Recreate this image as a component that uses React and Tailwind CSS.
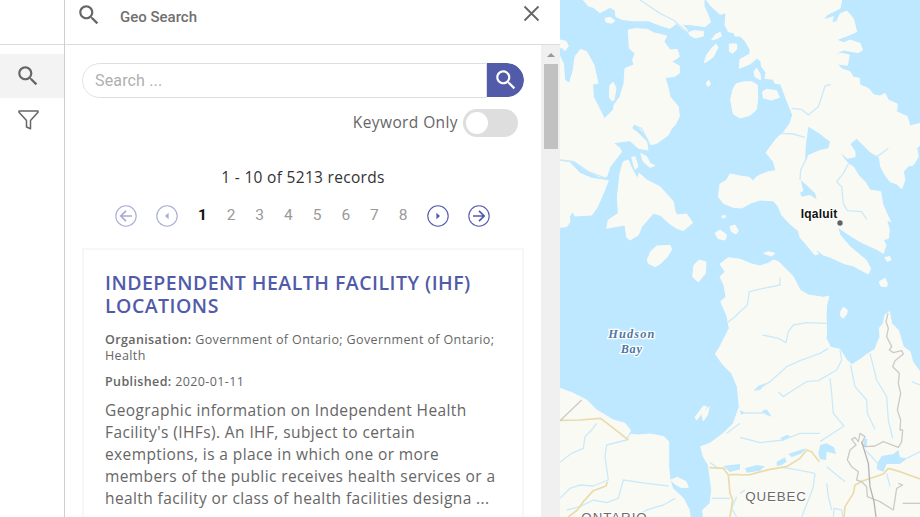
import React from 'react';

const SearchIcon = ({ size = 26, className = '' }) => (
  <svg width={size} height={size} viewBox="0 0 24 24" fill="currentColor" className={className}>
    <path d="M15.5 14h-.79l-.28-.27C15.41 12.59 16 11.11 16 9.5 16 5.91 13.09 3 9.5 3S3 5.91 3 9.5 5.91 16 9.5 16c1.61 0 3.09-.59 4.23-1.57l.27.28v.79l5 4.99L20.49 19l-4.99-5zm-6 0C7.01 14 5 11.99 5 9.5S7.01 5 9.5 5 14 7.01 14 9.5 11.99 14 9.5 14z" />
  </svg>
);

const PageArrow = ({ kind, faded }) => (
  <svg width="22" height="22" viewBox="0 0 22 22" fill="none" stroke="#515ba9" className={faded ? 'opacity-50' : ''}>
    <circle cx="11" cy="11" r="10.2" strokeWidth="1.1" />
    {kind === 'first' && <path d="M17 11H6M11 5.8 5.8 11l5.2 5.2" strokeWidth="1.7" />}
    {kind === 'prev' && <path d="M12.6 7.8v6.4L9 11z" fill="#515ba9" stroke="none" />}
    {kind === 'next' && <path d="M9.4 7.8v6.4L13 11z" fill="#515ba9" stroke="none" />}
    {kind === 'last' && <path d="M5 11h11M11 5.8l5.2 5.2-5.2 5.2" strokeWidth="1.7" />}
  </svg>
);

const land = [
  // Arctic islands along the top
  'M70 0L85 18 100 22 120 38 150 22 165 30 168 50 185 58 215 62 265 62 300 76 330 85 350 70 365 85 380 96 384 92 365 72 400 75 435 80 452 66 440 35 432 18 432 0Z',
  'M135 55L150 52 165 62 155 70 138 66Z',
  'M385 98L400 92 430 94 430 108 405 114 390 106Z',
  'M440 0L450 15 480 43 498 38 495 75 505 95 522 98 525 108 540 108 555 122 570 148 570 162 540 178 538 205 570 192 590 175 602 182 605 200 618 218 615 235 640 238 645 250 662 252 680 300 698 345 690 370 672 395 665 402 650 415 618 458 640 485 648 512 625 515 600 525 588 532 580 543 568 532 540 528 510 522 500 540 480 552 475 590 490 610 520 622 545 624 575 608 600 600 640 602 655 620 665 645 690 672 715 692 720 712 740 735 765 765 775 762 765 745 790 765 810 771 850 790 880 798 925 822 932 805 918 780 900 765 870 740 840 705 832 680 860 700 900 725 950 748 970 760 978 735 970 720 985 715 988 690 980 660 992 665 980 640 968 612 962 575 930 570 915 545 895 525 880 500 865 492 848 470 840 455 862 475 885 470 885 455 870 432 890 415 910 435 930 455 958 472 962 500 975 525 990 545 1010 552 1025 566 1035 540 1030 515 1045 498 1060 495 1075 470 1070 445 1080 435V370L1050 378 1042 350 1010 335 1012 312 985 300 975 280 960 288 942 285 925 265 900 255 898 235 880 232 870 215 848 208 830 192 862 196 868 165 845 160 820 165 850 150 895 158 908 150 900 130 870 120 852 128 828 120 860 108 890 95 880 55 860 33 840 42 830 65 815 68 820 50 790 60 800 45 840 25 845 0Z',
  'M433 188L440 165 455 145 468 132 474 142 460 170 445 182Z',
  'M455 120L465 105 480 96 484 108 470 116Z',
  'M508 132L530 132 530 148 518 160 508 154Z',
  'M439 248L446 241 451 250 447 259 440 255Z',
  'M512 300L518 270 528 252 548 246 575 245 592 255 593 300 588 330 570 346 540 354 520 342Z',
  'M608 275L620 268 650 272 658 292 635 300 610 294Z',
  'M582 215L590 205 600 222 602 240 585 230Z',
  // Melville and the mainland at the left edge
  'M0 120L18 124 25 138 15 152 5 142 0 145Z',
  'M0 170L10 190 14 240 28 250 40 210 45 170 62 148 80 155 102 195 114 250 98 252 100 290 115 320 133 356 160 330 162 315 180 290 192 250 195 205 222 195 218 180 225 160 208 145 205 90 225 86 262 88 280 98 320 108 312 125 330 150 352 148 358 170 335 185 358 198 358 220 342 230 315 232 325 265 330 290 355 320 358 350 345 375 335 385 325 405 290 430 272 434 262 412 240 385 222 372 215 385 235 400 260 425 264 450 235 445 210 422 160 428 180 445 185 455 150 500 140 530 118 530 80 510 45 485 0 478Z',
  'M150 255L160 247 168 265 162 300 155 302 148 290Z',
  'M0 484L30 488 60 520 95 535 145 542 130 580 110 625 95 645 45 648 38 635 28 650 30 665 20 680 0 682Z',
  'M190 485L205 480 215 505 232 535 238 520 260 540 300 560 340 605 344 630 350 645 380 642 398 668 370 692 350 685 330 672 300 645 280 640 245 680 235 705 210 720 200 712 195 675 165 680 140 685 145 660 175 640 172 590 180 520Z',
  'M215 472L225 470 234 500 225 508Z',
  'M242 460L260 470 270 490 285 497 270 502 250 485Z',
  'M262 780L272 755 290 738 330 736 335 748 322 770 300 792 285 800 265 790Z',
  'M465 700L480 690 500 705 495 720 475 716Z',
  'M510 680L525 675 535 692 528 702 515 695Z',
  'M485 649L496 646 496 653 488 654Z',
  'M398 830L402 795 418 780 438 786 436 820 415 846Z',
  'M611 760L625 755 645 760 635 768Z',
  'M842 935L850 922 862 930 860 942 850 955 842 948Z',
  'M958 845L975 835 982 850 980 860 962 858Z',
  'M974 772L990 770 993 780 982 784Z',
  // Quebec and Labrador
  'M480 792L505 773 540 778 575 792 600 798 625 790 640 780 655 785 680 810 700 830 720 870 745 885 790 892 807 888 800 915 798 950 800 1000 798 1015 812 1042 840 1048 860 1080 876 1094 905 1075 925 1060 945 1048 952 1028 960 1010 958 985 970 970 975 945 988 935 995 970 1015 990 1030 1040 1050 1055 1058 1085 1080 1115V1551H430L428 1530 450 1510 455 1470 445 1395 430 1370 422 1340 450 1330 490 1300 520 1270 538 1220 532 1160 515 1120 490 1095 466 1062 480 1040 490 1020 508 985 500 945 482 905 498 890 492 855 480 830 495 815Z',
  // Ontario
  'M0 1165L40 1180 80 1200 110 1230 160 1260 195 1270 212 1292 205 1302 235 1305 270 1302 312 1310 326 1325 326 1400 330 1440 338 1465 370 1495 388 1530 390 1551H0Z',
  'M332 1440L352 1432 378 1445 385 1462 362 1462 345 1452Z',
  'M405 1252L418 1235 430 1218 440 1220 432 1235 448 1220 442 1245 430 1262 425 1240 410 1260Z',
];

const lakes = [
  'M745 380L775 398 810 425 805 445 780 450 745 465 735 480 738 430Z',
  'M722 540L745 560 765 580 770 598 750 585 725 590 720 578 730 572Z',
  'M780 1335L800 1330 822 1342 828 1362 800 1355 798 1380 780 1378 775 1360Z',
  'M952 1390L965 1368 1000 1362 1015 1350 1020 1372 1042 1375 1020 1392 980 1392 970 1415 950 1408Z',
  'M555 1405L590 1395 615 1398 600 1412 560 1418Z',
  'M650 1385L675 1372 680 1385 665 1395 650 1398Z',
  'M685 1362L720 1350 740 1345 725 1360 695 1372Z',
  'M580 1172L595 1158 620 1148 600 1170Z',
  'M605 1233L620 1228 635 1250 618 1244Z',
  'M540 1230L555 1238 543 1245Z',
  'M490 1398L540 1392V1408L510 1416Z',
  'M660 1315L680 1305 692 1308 670 1322Z',
  'M910 1318L922 1316 920 1340 912 1340Z',
];

const rivers = [
  'M240 0L300 40 340 60 385 100', 'M0 480L40 484 85 515 130 532', 'M222 375L245 385 270 435',
  'M695 325L725 328 745 345 775 320 785 290 795 258 812 254', 'M665 400L700 402 735 412', 'M742 470L722 510 720 540',
  'M865 492L850 520 830 545 845 560 850 610 862 632 905 635 920 658', 'M950 470L965 460 985 445',
  'M500 970L525 950 540 935 562 915 568 875 610 865 660 855 660 832', 'M800 970L740 968 700 975 685 995 678 1028 655 1015 608 1005',
  'M805 1045L780 1060 720 1082 680 1100 630 1145 590 1170', 'M840 1050L845 1080 830 1110 775 1142 740 1145 700 1170 670 1190 655 1175',
  'M810 1135L815 1180 820 1240 852 1278 780 1325', 'M872 1095L885 1160 920 1200 922 1240 945 1288',
  'M930 1060L950 1140 980 1190 985 1260 998 1315', 'M550 1239H620', 'M540 1312L570 1320 600 1328 670 1320 720 1300 780 1300',
  'M0 1387L35 1360 70 1345 75 1310 95 1290 110 1270', 'M210 1300L200 1320 140 1335 135 1370 145 1440 100 1458 60 1455 30 1465 0 1495',
  'M326 1458L260 1450 190 1440 175 1495 140 1508 100 1500 60 1520 20 1530', 'M345 1495L310 1515 260 1530 225 1551',
  'M540 1270L500 1300', 'M450 1388L475 1405 540 1402', 'M455 1495H510', 'M670 1402L740 1415 765 1420',
  'M765 1420L760 1460 745 1500 725 1551', 'M800 1400L830 1425 855 1445', 'M800 1450L805 1490 815 1530',
  'M820 1551L822 1525 845 1530 848 1551', 'M915 1350L940 1375 965 1405', 'M1040 1375L1080 1355', 'M980 1420L990 1460',
  'M540 1480L555 1470', 'M530 1551L515 1525 530 1490', 'M1055 1145L1080 1155',
];

function MapView() {
  return (
    <div className="h-full w-[360px] shrink-0 overflow-hidden bg-[#bee8ff]">
      <svg width="360" height="517" viewBox="0 0 1080 1551">
        <g fill="#fafaf5" stroke="#fafaf5" strokeWidth="3" strokeLinejoin="round">
          {land.map((d) => <path key={d} d={d} />)}
        </g>
        <g fill="#bee8ff">{lakes.map((d) => <path key={d} d={d} />)}</g>
        <g fill="none" stroke="#cbeaf9" strokeWidth="4" strokeLinejoin="round">
          {rivers.map((d) => <path key={d} d={d} />)}
        </g>
        <g fill="none" stroke="#eadbaa" strokeWidth="5" strokeLinejoin="round">
          <path d="M0 1261L60 1260 122 1255 165 1288 205 1320M52 1530L70 1505 100 1472 138 1458 142 1445M52 1530L25 1551" />
          <path d="M540 1425L570 1424 630 1408 680 1400 720 1375 740 1350 755 1355 778 1385M448 1403L490 1405 505 1425 510 1480 518 1500 510 1551M508 1424H540" />
          <path d="M852 1551L855 1520 880 1480 885 1455 910 1442 970 1422 985 1405 1020 1415 1080 1437" />
        </g>
        <g fill="none" stroke="#cdcac8" strokeWidth="4" strokeLinejoin="round">
          <path d="M0 1262L65 1200" />
          <path d="M984 940L978 965 985 985 980 1010 995 1040 988 1050 1000 1058 1025 1052 1030 1062 1005 1082 998 1100 1018 1120 1015 1150 1022 1180 1012 1230 1022 1260 1020 1290 1028 1290 1025 1325 1015 1342 970 1325 945 1338 915 1340 905 1330 915 1310 900 1300 895 1325 885 1312 875 1318 888 1335 870 1350 862 1380 875 1400 895 1415 890 1440 905 1445 920 1460 922 1490 960 1505 1000 1530 1010 1465 1028 1455 1015 1450" />
          <path d="M1028 1510H1080" />
          <path stroke="#b4b4b4" d="M905 1325L925 1390 930 1460 942 1505 948 1551" />
        </g>
        <circle cx="840" cy="669" r="8" fill="#5f6464" />
        <text x="722" y="654" fontSize="36" fontWeight="700" fill="#111" stroke="#fff" strokeWidth="5" paintOrder="stroke" textLength="110" className="font-['Liberation_Sans',sans-serif]">Iqaluit</text>
        <g fontSize="37" fontWeight="700" fontStyle="italic" fill="#4f78a6" stroke="#fff" strokeWidth="8" paintOrder="stroke" strokeLinejoin="round" className="font-['Liberation_Serif',serif]">
          <text x="145" y="1014" textLength="138">Hudson</text>
          <text x="182" y="1058" textLength="64">Bay</text>
        </g>
        <g fontSize="40" fill="#6b6b6b" stroke="#fff" strokeWidth="5" paintOrder="stroke" className="font-['Liberation_Sans',sans-serif]">
          <text x="556" y="1502" textLength="182">QUEBEC</text>
          <text x="64" y="1566" textLength="196">ONTARIO</text>
        </g>
      </svg>
    </div>
  );
}

function ResultCard() {
  return (
    <article className="mt-[21px] h-[360px] w-[442px] shrink-0 border-2 border-[#f7f7f7] px-[21px] pt-[21px] text-[#666]">
      <h2 className="whitespace-nowrap text-[19.5px] font-semibold leading-[23px] tracking-[0.48px] text-[#515ba9]">
        INDEPENDENT HEALTH FACILITY (IHF)<br />LOCATIONS
      </h2>
      <p className="mt-[15px] whitespace-nowrap text-[12.5px] leading-[15.5px] tracking-[0.38px]">
        <strong className="font-semibold">Organisation:</strong> Government of Ontario; Government of Ontario;<br />Health
      </p>
      <p className="mt-[11px] text-[12.5px] leading-[15px] tracking-[0.38px]"><strong className="font-semibold">Published:</strong> 2020-01-11</p>
      <p className="mt-[10px] whitespace-nowrap text-[15.5px] leading-[22px] tracking-[0.4px]">
        Geographic information on Independent Health<br />Facility's (IHFs). An IHF, subject to certain<br />exemptions, is a place in which one or more<br />members of the public receives health services or a<br />health facility or class of health facilities designa ...
      </p>
    </article>
  );
}

export default function App() {
  return (
    <div className="flex h-[517px] w-[920px] overflow-hidden bg-white font-['Open_Sans',sans-serif] text-[#666]">
      <nav className="flex w-[64px] shrink-0 flex-col">
        <div className="h-[45px] border-b border-[#dcdcdc]" />
        <div className="mt-[9px] flex h-[44px] items-center bg-[#f3f3f3] pl-[15px]">
          <SearchIcon size={26} />
        </div>
        <div className="flex h-[44px] items-center pl-[18px]">
          <svg width="21" height="20" viewBox="0 0 21 20" fill="none" stroke="currentColor" strokeWidth="1.5" strokeLinejoin="round">
            <path d="M1 1h19v1.2L12.5 10.5v8.2L8.5 17V10.5L1 2.2z" />
          </svg>
        </div>
      </nav>
      <main className="flex w-[496px] shrink-0 flex-col border-l border-[#cfcfcf]">
        <header className="flex h-[45px] shrink-0 items-start border-b border-[#dcdcdc] pl-[11px]">
          <SearchIcon size={26} className="mt-[2px]" />
          <h1 className="ml-[18px] mt-[7px] font-['Roboto',sans-serif] text-[15px] font-medium leading-[20px] text-[#707070]">Geo Search</h1>
          <svg className="ml-auto mr-[20px] mt-[5px]" width="17" height="17" viewBox="0 0 17 17" fill="none" stroke="currentColor" strokeWidth="1.8">
            <path d="M1.5 1.5l14 14M15.5 1.5l-14 14" />
          </svg>
        </header>
        <div className="flex min-h-0 flex-1">
          <section className="flex w-[476px] flex-col overflow-hidden pl-[17px]">
            <div className="mt-[18px] flex h-[35px] w-[442px] shrink-0 overflow-hidden rounded-full">
              <div className="flex flex-1 items-center rounded-l-full border border-[#dedede] pl-[12px] font-['Roboto',sans-serif] text-[16px] tracking-[0.15px] text-[#b0b0b0]">Search ...</div>
              <button className="flex h-[34px] w-[37px] items-center justify-center rounded-r-full bg-[#515ba9] text-white">
                <SearchIcon size={26} />
              </button>
            </div>
            <div className="mt-[11px] flex h-[28px] shrink-0 items-center justify-end pr-[23px]">
              <span className="text-[15.5px] tracking-[0.4px]">Keyword Only</span>
              <span className="ml-[5px] flex h-[28px] w-[55px] items-center rounded-full bg-[#dedede] pl-[3px]">
                <span className="h-[22px] w-[22px] rounded-full bg-white" />
              </span>
            </div>
            <div className="mt-[29px] h-[22px] w-[442px] shrink-0 text-center text-[15.5px] leading-[22px] tracking-[0.3px] text-[#333]">1 - 10 of 5213 records</div>
            <div className="mt-[17px] flex h-[22px] w-[442px] shrink-0 items-center pl-[33px]">
              <PageArrow kind="first" faded />
              <span className="w-[19px]" />
              <PageArrow kind="prev" faded />
              <div className="-mt-[2px] ml-[10px] mr-[9.6px] flex font-['Roboto',sans-serif] text-[15.5px] leading-[20px] text-[#999]">
                {[1, 2, 3, 4, 5, 6, 7, 8].map((n) => (
                  <span key={n} className={n === 1 ? 'w-[28.7px] text-center font-bold text-[#111]' : 'w-[28.7px] text-center'}>{n}</span>
                ))}
              </div>
              <PageArrow kind="next" />
              <span className="w-[19px]" />
              <PageArrow kind="last" />
            </div>
            <ResultCard />
          </section>
          <div className="flex flex-1 flex-col items-center bg-[#f0f0f0]">
            <svg width="8" height="5" viewBox="0 0 8 5" className="mb-[7px] mt-[7px]" fill="#999"><path d="M0 5L4 1l4 4z" /></svg>
            <div className="h-[85px] w-[14px] bg-[#c1c1c1]" />
          </div>
        </div>
      </main>
      <MapView />
    </div>
  );
}
